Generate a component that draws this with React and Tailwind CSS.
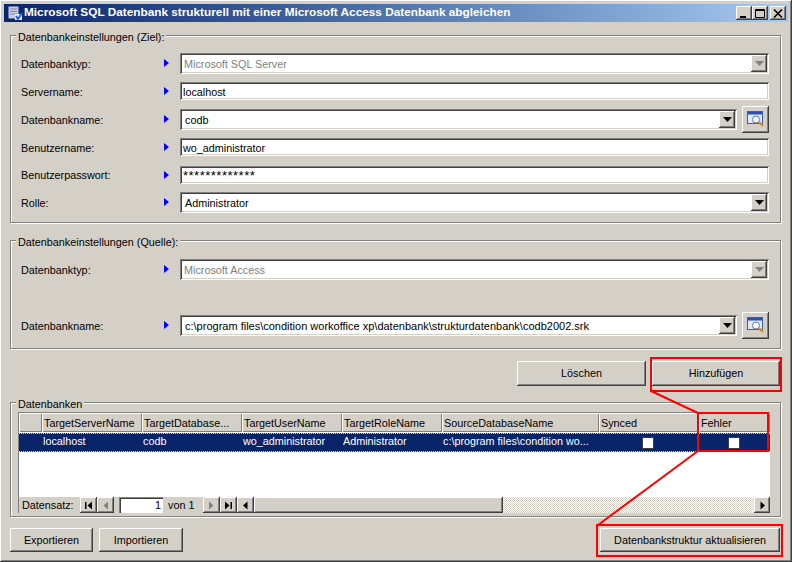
import React from 'react'

const raised = 'bg-[#d4d0c8] shadow-[inset_-1px_-1px_#404040,inset_1px_1px_#fff,inset_-2px_-2px_#808080,inset_2px_2px_#d4d0c8]'
const sunken = 'shadow-[inset_1px_1px_#808080,inset_-1px_-1px_#fff,inset_2px_2px_#404040,inset_-2px_-2px_#d4d0c8]'

const Marker = () => (
  <svg width="5" height="8" viewBox="0 0 5 8">
    <path d="M0 0 L5 4 L0 8 Z" fill="#0000ff" />
  </svg>
)

const Arrow = ({ disabled }) => (
  <div className={`flex w-[16px] items-center justify-center self-stretch ${raised}`}>
    <svg width="9" height="5" viewBox="0 0 9 5">
      <path d="M0 0 H9 L4.5 5 Z" fill={disabled ? '#808080' : '#000'} />
    </svg>
  </div>
)

const Combo = ({ value, disabled, className = '' }) => (
  <div className={`flex h-[21px] items-center bg-white p-[2px] ${sunken} ${className}`}>
    <span className={`flex-1 truncate pt-[2px] ${disabled ? 'pl-[2px] text-[#808080]' : 'pl-[3px] text-black'}`}>{value}</span>
    <Arrow disabled={disabled} />
  </div>
)

const TextField = ({ value, className = '' }) => (
  <div className={`flex h-[18px] flex-1 items-center bg-white pt-[2px] pl-[3px] text-black ${sunken} ${className}`}>{value}</div>
)

const BrowseButton = () => (
  <div className={`ml-[5px] flex h-[27px] w-[27px] items-center justify-center ${raised}`}>
    <svg width="18" height="16" viewBox="0 0 18 16">
      <rect x="0.5" y="0.5" width="15" height="12" fill="#dfe9f8" stroke="#3a5fb0" />
      <rect x="1" y="1" width="14" height="2.5" fill="#2a4fb8" />
      <circle cx="9" cy="8.5" r="3.5" fill="#f4f8ff" stroke="#6c7a90" />
      <path d="M12 11 L16 15" stroke="#d88a20" strokeWidth="2" />
    </svg>
  </div>
)

const Row = ({ label, height = 'h-[28px]', children }) => (
  <div className={`flex items-center ${height}`}>
    <span className="w-[153px] pt-[2px] pl-[10px] text-black">{label}</span>
    <span className="flex w-[16px] items-center"><Marker /></span>
    <div className="flex flex-1 items-center">{children}</div>
  </div>
)

const Group = ({ title, className = '', children }) => (
  <div className={`relative border border-[#808080] shadow-[inset_1px_1px_#fff,1px_1px_#fff] ${className}`}>
    <span className="absolute top-[-7px] left-[5px] bg-[#d4d0c8] px-[2px] text-black">{title}</span>
    {children}
  </div>
)

const Button = ({ className = '', children }) => (
  <div className={`flex items-center justify-center text-black ${raised} ${className}`}>{children}</div>
)

const NavButton = ({ d, disabled, className = 'w-[17px]' }) => (
  <div className={`flex h-[16px] items-center justify-center ${raised} ${className}`}>
    <svg width="9" height="9" viewBox="0 0 9 9">
      <path d={d} fill={disabled ? '#808080' : '#000'} />
    </svg>
  </div>
)

const columns = [
  'TargetServerName',
  'TargetDatabase...',
  'TargetUserName',
  'TargetRoleName',
  'SourceDatabaseName',
  'Synced',
  'Fehler',
]

const cells = ['localhost', 'codb', 'wo_administrator', 'Administrator', 'c:\\program files\\condition wo...']

const Checkbox = () => (
  <div className="pr-[2px]">
    <div className="mx-auto h-[12px] w-[12px] border border-[#404040] bg-white" />
  </div>
)

const Hatch = () => (
  <svg className="h-[16px] flex-1" shapeRendering="crispEdges">
    <defs>
      <pattern id="hatch" width="2" height="2" patternUnits="userSpaceOnUse">
        <rect width="2" height="2" fill="#fff" />
        <rect width="1" height="1" fill="#d4d0c8" />
        <rect x="1" y="1" width="1" height="1" fill="#d4d0c8" />
      </pattern>
    </defs>
    <rect width="100%" height="100%" fill="url(#hatch)" />
  </svg>
)

const Grid = () => (
  <div className="flex h-[101px] flex-col border-t border-l border-[#808080] bg-white">
    <div className="grid h-[19px] grid-cols-[23px_100px_100px_100px_100px_157px_100px_1fr] bg-[#d4d0c8]">
      <div className="border-t border-l border-t-white border-l-white shadow-[inset_-1px_-1px_#808080]" />
      {columns.map((c) => (
        <div key={c} className="truncate border-t border-l border-t-white border-l-white pl-[1px] leading-[18px] text-black shadow-[inset_-1px_-1px_#808080]">
          {c}
        </div>
      ))}
    </div>
    <div className="mt-[1px] grid h-[19px] grid-cols-[23px_100px_100px_100px_100px_157px_100px_1fr] items-center border-y border-dotted border-y-[#e8d890] bg-[#0a246a] text-white">
      <div />
      {cells.map((c) => (
        <div key={c} className="truncate pb-[2px] pl-[1px]">{c}</div>
      ))}
      <Checkbox />
      <Checkbox />
    </div>
    <div className="flex-1" />
    <div className="flex h-[16px] items-center bg-[#d4d0c8]">
      <span className="w-[61px] pl-[3px] text-black">Datensatz:</span>
      <NavButton d="M1 1 H2.5 V8 H1 Z M8 0.5 V8.5 L3.5 4.5 Z" />
      <NavButton d="M7 0.5 V8.5 L2.5 4.5 Z" disabled />
      <div className="ml-[5px] h-[16px] w-[44px] bg-white pr-[2px] text-right leading-[17px] text-black shadow-[inset_1px_1px_#808080,inset_2px_2px_#404040]">1</div>
      <span className="w-[40px] pl-[5px] text-black">von 1</span>
      <NavButton d="M2 0.5 V8.5 L6.5 4.5 Z" disabled />
      <NavButton d="M1 0.5 V8.5 L5.5 4.5 Z M6.5 1 H8 V8 H6.5 Z" />
      <NavButton d="M6.5 0.5 V8.5 L2 4.5 Z" />
      <div className={`h-[16px] w-[249px] ${raised}`} />
      <Hatch />
      <NavButton d="M2.5 0.5 V8.5 L7 4.5 Z" className="w-[16px]" />
    </div>
  </div>
)

const WindowButton = ({ className = '', children }) => (
  <div className={`flex h-[14px] w-[16px] items-center justify-center ${raised} ${className}`}>
    <svg width="10" height="9" viewBox="0 0 10 9">{children}</svg>
  </div>
)

// red annotation drawn on top of the dialog
const Annotation = () => (
  <svg className="pointer-events-none absolute inset-0" width="792" height="562" viewBox="0 0 792 562" fill="none" stroke="#ff0000" strokeWidth="2">
    <rect x="651" y="358" width="130" height="33" />
    <rect x="698" y="413" width="70" height="38" />
    <rect x="597" y="525" width="185" height="31" />
    <path d="M651 391 L698 413" />
    <path d="M698 451 L598 525" />
  </svg>
)

export default function App() {
  return (
    <div className={`relative h-[562px] w-[792px] overflow-hidden p-[4px] font-['Liberation_Sans',sans-serif] text-[10.8px] ${raised}`}>
      <div className="flex h-[18px] items-center bg-gradient-to-r from-[#0a246a] to-[#a6caf0] pr-[2px] pl-[4px]">
        <svg width="15" height="15" viewBox="0 0 15 15">
          <rect x="0.5" y="0.5" width="10" height="12" rx="1" fill="#c4cce0" stroke="#6a78a0" />
          <path d="M2 3 H9 M2 5.5 H9 M2 8 H9" stroke="#7a88b0" />
          <rect x="7" y="8" width="7" height="6" fill="#e8f0ff" />
          <path d="M8 10 L10 13 L14 7" stroke="#1f5fe0" strokeWidth="2" fill="none" />
        </svg>
        <span className="ml-[1px] flex-1 text-[11.8px] font-bold whitespace-nowrap text-white">
          Microsoft SQL Datenbank strukturell mit einer Microsoft Access Datenbank abgleichen
        </span>
        <WindowButton>
          <path d="M1 7 H7 V9 H1 Z" fill="#000" />
        </WindowButton>
        <WindowButton>
          <path d="M0.5 0.5 H9.5 V8.5 H0.5 Z M0.5 1.5 H9.5" stroke="#000" fill="none" />
        </WindowButton>
        <WindowButton className="ml-[2px]">
          <path d="M1 0.5 L9 8.5 M9 0.5 L1 8.5" stroke="#000" strokeWidth="1.6" />
        </WindowButton>
      </div>

      <div className="pr-[7px] pl-[6px]">
        <Group title="Datenbankeinstellungen (Ziel):" className="mt-[13px] pt-[13px] pb-[6px]">
          <div className="pr-[11px]">
            <Row label="Datenbanktyp:"><Combo value="Microsoft SQL Server" disabled className="flex-1" /></Row>
            <Row label="Servername:"><TextField value="localhost" /></Row>
            <Row label="Datenbankname:"><Combo value="codb" className="flex-1" /><BrowseButton /></Row>
            <Row label="Benutzername:"><TextField value="wo_administrator" /></Row>
            <Row label="Benutzerpasswort:" height="h-[27px]"><TextField value="*************" className="text-[13px] tracking-[0.5px]" /></Row>
            <Row label="Rolle:"><Combo value="Administrator" className="flex-1" /></Row>
          </div>
        </Group>

        <Group title="Datenbankeinstellungen (Quelle):" className="mt-[17px] pt-[14px] pb-[9px]">
          <div className="pr-[11px]">
            <Row label="Datenbanktyp:"><Combo value="Microsoft Access" disabled className="flex-1" /></Row>
            <div className="h-[28px]" />
            <Row label="Datenbankname:">
              <Combo value="c:\program files\condition workoffice xp\datenbank\strukturdatenbank\codb2002.srk" className="flex-1 text-[11px]" />
              <BrowseButton />
            </Row>
          </div>
        </Group>

        <div className="mt-[12px] mr-[1px] flex h-[25px] justify-end gap-[6px]">
          <Button className="w-[129px]">Löschen</Button>
          <Button className="w-[128px]">Hinzufügen</Button>
        </div>

        <Group title="Datenbanken" className="mt-[16px] h-[115px] pt-[9px] pr-[10px] pl-[7px]">
          <Grid />
        </Group>

        <div className="mt-[11px] flex h-[24px] gap-[6px]">
          <Button className="w-[83px]">Exportieren</Button>
          <Button className="w-[84px]">Importieren</Button>
          <Button className="mr-[1px] ml-auto w-[180px]">Datenbankstruktur aktualisieren</Button>
        </div>
      </div>

      <Annotation />
    </div>
  )
}
